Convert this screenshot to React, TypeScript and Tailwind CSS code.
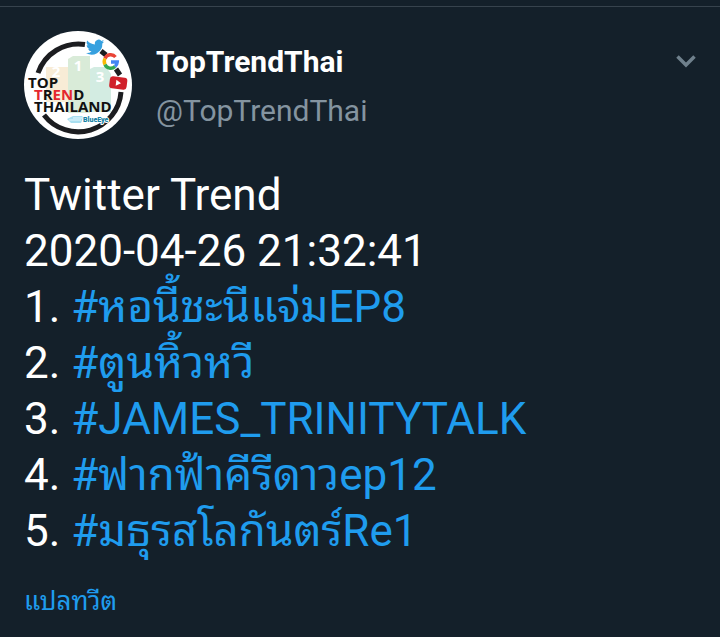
const trends = [
  "#หอนี้ชะนีแจ่มEP8",
  "#ตูนหิ้วหวี",
  "#JAMES_TRINITYTALK",
  "#ฟากฟ้าคีรีดาวep12",
  "#มธุรสโลกันตร์Re1",
];

function Avatar() {
  return (
    <svg
      viewBox="0 0 108 108"
      className="size-[108px] shrink-0"
      role="img"
      aria-label="Top Trend Thailand"
    >
      <circle cx="54" cy="54" r="54" fill="#fff" />
      {/* broken ring */}
      <g fill="none" stroke="#1c1d20" strokeWidth="5">
        <path d="M14 42 A43 43 0 0 1 61 13.500" />
        <path d="M20 84 A43 43 0 0 0 97 61" />
        <path d="M77 20 L82 24" />
        <path d="M92 38 L96 44" />
      </g>
      {/* podium */}
      <path d="M22 36h22v35H22z" fill="#f8ecd6" />
      <path d="M44 28l5-3h17v57H44z" fill="#d9ebd8" />
      <path d="M66 38l4-2h12l5 7v38H66z" fill="#d3ece2" />
      <g fill="#fff" fontWeight="700" fontSize="15" textAnchor="middle" className="font-['Open_Sans',sans-serif]">
        <text x="32" y="46">2</text>
        <text x="54" y="40">1</text>
        <text x="76" y="51">3</text>
      </g>
      {/* bird */}
      <path
        transform="translate(62 7) scale(.76)"
        fill="#36a0df"
        d="M24 4.600a9.800 9.800 0 0 1-2.800.8 5 5 0 0 0 2.100-2.700 9.800 9.800 0 0 1-3.100 1.200A4.900 4.900 0 0 0 11.800 8.400 14 14 0 0 1 1.700 3.200a4.900 4.900 0 0 0 1.500 6.600 4.900 4.900 0 0 1-2.200-.6 4.900 4.900 0 0 0 3.900 4.900 4.900 4.900 0 0 1-2.200.1 4.900 4.900 0 0 0 4.600 3.400A9.900 9.900 0 0 1 0 19.600a14 14 0 0 0 21.500-12.400A10 10 0 0 0 24 4.600z"
      />
      {/* search engine letter mark */}
      <g fill="none" strokeWidth="3.400">
        <path d="M91.500 26 A6.200 6.200 0 0 0 81 27.500" stroke="#e94335" />
        <path d="M81 27.500 A6.200 6.200 0 0 0 81 33.500" stroke="#f9bb05" />
        <path d="M81 33.500 A6.200 6.200 0 0 0 91 35.500" stroke="#34a853" />
        <path d="M91 35.500 A6.200 6.200 0 0 0 93.300 31 H87" stroke="#4285f4" />
      </g>
      {/* video badge */}
      <g transform="rotate(7 94 52)">
        <rect x="85.500" y="46" width="17.500" height="12" rx="3" fill="#d0202a" />
        <path d="M92 49v6l5-3z" fill="#fff" />
      </g>
      {/* eye emblem */}
      <path d="M43 88 L49 85 H60 L57 92 H47z" fill="#a9dff0" />
      <path d="M45 89h12M49 87h9" stroke="#e8f8fc" strokeWidth="1" />
      <g className="font-['Open_Sans',sans-serif]" fontWeight="700" fontSize="15">
        <text x="4" y="57" fill="#111">TOP</text>
        <text x="10" y="69" fill="#111">
          <tspan fill="#e4282f">T</tspan>R<tspan fill="#e4282f">EN</tspan>D
        </text>
        <text x="10" y="81" fill="#111">THAILAND</text>
      </g>
      <text x="59" y="91" fill="#1683a6" stroke="#fff" strokeWidth="2" paintOrder="stroke" fontSize="7" fontWeight="900" className="font-['Roboto',sans-serif]">BlueEye</text>
    </svg>
  );
}

export default function App() {
  return (
    <main className="min-h-screen bg-[#14202a] pt-1.5 text-white font-[Roboto,'Noto_Sans_Thai_Looped','Droid_Sans_Thai',Waree,Loma,Garuda,'Noto_Sans_Thai','Noto_Sans',sans-serif]">
      <article className="border-t border-[#37434d] px-6 pt-6">
        <header className="flex items-start">
          <Avatar />
          <div className="ml-6 min-w-0 flex-1 pt-1.5">
            <h1 className="text-[30px] leading-[49px] font-bold">TopTrendThai</h1>
            <p className="text-[30px] leading-[49px] text-[#8494a0]">@TopTrendThai</p>
          </div>
          <button type="button" aria-label="More options" className="mt-6 text-[#6f808c]">
            <svg viewBox="0 0 20 13" className="h-[13px] w-5" fill="none" stroke="currentColor" strokeWidth="3.500">
              <path d="M1.500 1.500 L10 10 L18.500 1.500" />
            </svg>
          </button>
        </header>
        <div className="mt-7 text-[44px] leading-[56px]">
          <p>Twitter Trend</p>
          <p>2020-04-26 21:32:41</p>
          <ol>
            {trends.map((tag, i) => (
              <li key={tag}>
                {i + 1}. <a href="#trend" className="text-[#1f9cee]">{tag}</a>
              </li>
            ))}
          </ol>
        </div>
        <a href="#translate" className="mt-6 inline-block text-[26px] leading-[36px] text-[#1f9cee]">
          แปลทวีต
        </a>
      </article>
    </main>
  );
}
